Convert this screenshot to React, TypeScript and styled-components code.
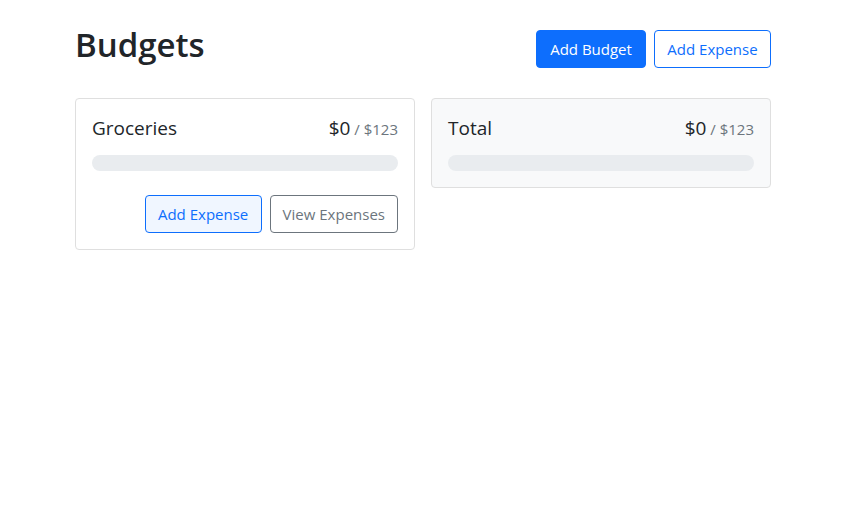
import React from "react";
import styled, { createGlobalStyle, css } from "styled-components";

const GlobalStyle = createGlobalStyle`
  *, *::before, *::after { box-sizing: border-box; }
  body {
    margin: 0;
    background: #fff;
    color: #212529;
    font-family: "Open Sans", "Noto Sans", sans-serif;
    font-size: 16px;
    line-height: 24px;
  }
`;

const Container = styled.main`
  max-width: 720px;
  margin: 24px auto;
  padding: 0 12px;
`;

const Header = styled.header`
  display: flex;
  align-items: center;
  gap: 8px;
  margin-bottom: 24px;
`;

const Title = styled.h1`
  margin: 0 auto 8px 0;
  font-size: 33px;
  font-weight: 600;
  line-height: 42px;
`;

type Variant = "primary" | "outlinePrimary" | "outlineSecondary";

const variants = {
  primary: css`
    min-width: 110px;
    color: #fff;
    background: #0d6efd;
    border-color: #0d6efd;
  `,
  outlinePrimary: css`
    min-width: 117px;
    color: #0d6efd;
    border-color: #0d6efd;
  `,
  outlineSecondary: css`
    min-width: 128px;
    color: #6c757d;
    border-color: #6c757d;
  `,
};

const Button = styled.button<{ $variant: Variant; $tinted?: boolean }>`
  padding: 6px 12px;
  border: 1px solid;
  border-radius: 4px;
  background: ${(p) => (p.$tinted ? "#f0f6ff" : "#fff")};
  font-family: inherit;
  font-size: 15px;
  line-height: 24px;
  white-space: nowrap;
  cursor: pointer;
  ${(p) => variants[p.$variant]}
`;

const Grid = styled.section`
  display: grid;
  grid-template-columns: repeat(auto-fill, minmax(300px, 1fr));
  gap: 16px;
  align-items: start;
`;

const Card = styled.article<{ $muted?: boolean }>`
  padding: 16px;
  border: 1px solid #dfdfdf;
  border-radius: 4px;
  background: ${(p) => (p.$muted ? "#f8f9fa" : "#fff")};
`;

const CardTitle = styled.div`
  display: flex;
  justify-content: space-between;
  align-items: baseline;
  margin-bottom: 14px;
  font-size: 19px;
  line-height: 26px;
`;

const Max = styled.span`
  color: #6c757d;
  font-size: 15px;
  line-height: 16px;
`;

const Track = styled.div`
  height: 16px;
  overflow: hidden;
  border-radius: 8px;
  background: #e9ecef;
`;

const Fill = styled.div`
  height: 100%;
  background: #0d6efd;
`;

const Actions = styled.div`
  display: flex;
  justify-content: flex-end;
  gap: 8px;
  margin-top: 24px;
`;

interface BudgetCardProps {
  name: string;
  amount: number;
  max: number;
  muted?: boolean;
  actions?: boolean;
}

function BudgetCard({ name, amount, max, muted, actions }: BudgetCardProps) {
  return (
    <Card $muted={muted}>
      <CardTitle>
        <span>{name}</span>
        <span>
          ${amount}
          <Max> / ${max}</Max>
        </span>
      </CardTitle>
      <Track role="progressbar" aria-label={name} aria-valuemin={0} aria-valuemax={max} aria-valuenow={amount}>
        <Fill style={{ width: `${(amount / max) * 100}%` }} />
      </Track>
      {actions && (
        <Actions>
          <Button type="button" $variant="outlinePrimary" $tinted>Add Expense</Button>
          <Button type="button" $variant="outlineSecondary">View Expenses</Button>
        </Actions>
      )}
    </Card>
  );
}

export default function App() {
  return (
    <>
      <GlobalStyle />
      <Container>
        <Header>
          <Title>Budgets</Title>
          <Button type="button" $variant="primary">Add Budget</Button>
          <Button type="button" $variant="outlinePrimary">Add Expense</Button>
        </Header>
        <Grid>
          <BudgetCard name="Groceries" amount={0} max={123} actions />
          <BudgetCard name="Total" amount={0} max={123} muted />
        </Grid>
      </Container>
    </>
  );
}
